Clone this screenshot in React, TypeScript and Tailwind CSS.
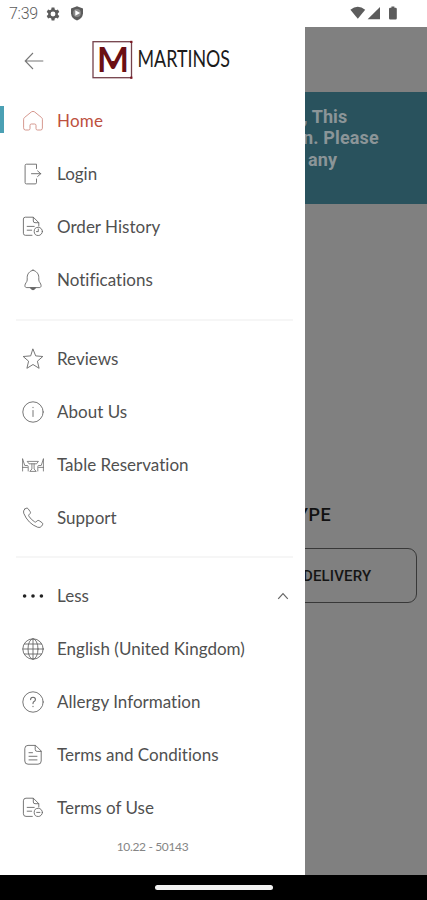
import type { ReactNode } from 'react'

interface MenuItem {
  label: string
  icon: ReactNode
  active?: boolean
  expanded?: boolean
}

function Icon({ children }: { children: ReactNode }) {
  return (
    <svg
      width="22"
      height="22"
      viewBox="0 0 22 22"
      fill="none"
      stroke="currentColor"
      strokeWidth="0.9"
      strokeLinecap="round"
      strokeLinejoin="round"
      className="shrink-0"
    >
      {children}
    </svg>
  )
}

const homeIcon = (
  <Icon>
    <path d="M1.6 9.3 Q1.6 8.3 2.4 7.6 L9.4 1.9 Q11 .8 12.6 1.9 L19.6 7.6 Q20.4 8.3 20.4 9.3 V18.2 Q20.4 20 18.6 20 H15.4 Q14 20 14 18.6 V15.4 Q14 14 12.6 14 H9.4 Q8 14 8 15.4 V18.6 Q8 20 6.6 20 H3.4 Q1.6 20 1.6 18.2 Z" />
  </Icon>
)

const loginIcon = (
  <Icon>
    <path d="M14.5 5.5 V1.2 H4.4 Q3.1 1.2 3.1 2.5 V19.6 Q3.1 20.9 4.4 20.9 H13.2 Q14.5 20.9 14.5 19.6 V16" />
    <path d="M9.5 10.7 H18.8 M15.6 7.9 L18.8 10.7 L15.6 13.5" />
  </Icon>
)

const orderIcon = (
  <Icon>
    <path d="M10 19.3 H3.4 Q1.4 19.3 1.4 17.3 V3 Q1.4 1.2 3.4 1.2 H11.3 L16.8 6.7 V10" />
    <path d="M11.3 1.4 V5 Q11.3 6.7 13 6.7 H16.6" />
    <path d="M5.2 10.4 H12.2 M5.2 14.2 H9.7" />
    <circle cx="16.3" cy="15.4" r="4.1" />
    <path d="M16.3 13 V15.6 H14.5" />
  </Icon>
)

const bellIcon = (
  <Icon>
    <path d="M11 1.2 C7.5 2.1 5.2 4.9 5.2 8.4 V11 C5.2 13.1 2.9 14.2 2.9 16.7 C2.9 18.1 3.8 18.6 5 18.6 H17 C18.2 18.6 19.1 18.1 19.1 16.7 C19.1 14.2 16.8 13.1 16.8 11 V8.4 C16.8 4.9 14.5 2.1 11 1.2 Z" />
    <path d="M8.4 18.9 Q11 23 13.6 18.9 Z" fill="currentColor" />
  </Icon>
)

const starIcon = (
  <Icon>
    <path d="M11 1.2 L13.7 7.9 L20.8 8.5 L15.4 13.2 L17.1 20.3 L11 16.5 L4.9 20.3 L6.6 13.2 L1.2 8.5 L8.3 7.9 Z" />
  </Icon>
)

const infoIcon = (
  <Icon>
    <circle cx="11" cy="11" r="10.2" />
    <path d="M11 9.5 V15.5 M11 6.3 V6.7" />
  </Icon>
)

const tableIcon = (
  <Icon>
    <g strokeWidth="0.8">
      <path d="M.6 5 V17 M.6 5 L2.8 11.5 H5.2 Q6.2 11.5 6.2 12.5 V17 M.6 13.4 H5.4" />
      <path d="M21.4 5 V17 M21.4 5 L19.2 11.5 H16.8 Q15.8 11.5 15.8 12.5 V17 M21.4 13.4 H16.6" />
      <path d="M5.6 7.4 H16.4 L14.6 9.8 H7.4 Z" />
      <path d="M9.9 9.8 V15 L7.8 17.4 H14.2 L12.1 15 V9.8" />
    </g>
  </Icon>
)

const phoneIcon = (
  <Icon>
    <path d="M2.6 2.2 L4 1.3 Q5.2 .7 6.1 1.7 L8.2 4.7 Q8.9 5.8 8 6.7 L6.9 7.8 Q6.4 8.4 6.9 9.2 Q9 12.6 12.7 14.9 Q13.5 15.4 14.1 14.8 L15.2 13.8 Q16.1 13 17.2 13.7 L20.2 15.8 Q21.2 16.7 20.5 17.8 L19.6 19.2 Q18.3 21 15.8 20.3 Q6 16.7 1.7 6.2 Q.9 3.8 2.6 2.2 Z" />
  </Icon>
)

const dotsIcon = (
  <Icon>
    <g fill="currentColor" stroke="none">
      <circle cx="2.6" cy="11" r="1.8" />
      <circle cx="11" cy="11" r="1.8" />
      <circle cx="19.4" cy="11" r="1.8" />
    </g>
  </Icon>
)

const globeIcon = (
  <Icon>
    <circle cx="11" cy="11" r="10.2" />
    <ellipse cx="11" cy="11" rx="5" ry="10.2" />
    <path d="M11 .8 V21.2 M.8 11 H21.2 M2.4 6 H19.6 M2.4 16 H19.6" />
  </Icon>
)

const questionIcon = (
  <Icon>
    <circle cx="11" cy="11" r="10.2" />
    <path d="M8.6 8.6 Q8.6 6.2 11 6.2 Q13.4 6.2 13.4 8.4 Q13.4 9.7 12 10.5 Q11 11.1 11 12.6 M11 15.2 V15.6" strokeWidth="1.1" />
  </Icon>
)

const termsIcon = (
  <Icon>
    <path d="M13.2 1.4 H6 Q2.8 1.4 2.8 4.6 V17 Q2.8 20.2 6 20.2 H16 Q19.2 20.2 19.2 17 V7.4 Z" />
    <path d="M13.2 1.6 V5.4 Q13.2 7.4 15.2 7.4 H19" />
    <path d="M7 8.7 H10.5 M7 12.3 H15 M7 15.9 H15" />
  </Icon>
)

const useIcon = (
  <Icon>
    <path d="M10.3 19.4 H4 Q1.4 19.4 1.4 16.8 V3.8 Q1.4 1.2 4 1.2 H11.3 L16.8 6.7 V10" />
    <path d="M11.3 1.4 V5 Q11.3 6.7 13 6.7 H16.6" />
    <path d="M5.2 10.4 H12.2 M5.2 14.2 H9.7" />
    <circle cx="16.3" cy="15.4" r="4.1" />
    <path d="M14.7 15.4 H17.9" />
  </Icon>
)

const groups: MenuItem[][] = [
  [
    { label: 'Home', icon: homeIcon, active: true },
    { label: 'Login', icon: loginIcon },
    { label: 'Order History', icon: orderIcon },
    { label: 'Notifications', icon: bellIcon },
  ],
  [
    { label: 'Reviews', icon: starIcon },
    { label: 'About Us', icon: infoIcon },
    { label: 'Table Reservation', icon: tableIcon },
    { label: 'Support', icon: phoneIcon },
  ],
  [
    { label: 'Less', icon: dotsIcon, expanded: true },
    { label: 'English (United Kingdom)', icon: globeIcon },
    { label: 'Allergy Information', icon: questionIcon },
    { label: 'Terms and Conditions', icon: termsIcon },
    { label: 'Terms of Use', icon: useIcon },
  ],
]

function StatusBar() {
  return (
    <header className="flex h-[27px] shrink-0 items-center bg-white pl-[9px] text-[#5c5c5c]">
      <span className="w-[30px] font-['Roboto',sans-serif] text-[16px] font-light tracking-[-0.3px]">7:39</span>
      <svg width="14" height="14" viewBox="0 0 24 24" fill="currentColor" className="ml-[7px]">
        <path
          fillRule="evenodd"
          d="M9.6 1 H14.4 L15 4.3 L17.2 5.6 L20.4 4.4 L22.8 8.6 L20.3 10.8 V13.2 L22.8 15.4 L20.4 19.6 L17.2 18.4 L15 19.7 L14.4 23 H9.6 L9 19.7 L6.8 18.4 L3.6 19.6 L1.2 15.4 L3.7 13.2 V10.8 L1.2 8.6 L3.6 4.4 L6.8 5.6 L9 4.3 Z M12 7.8 A4.2 4.2 0 1 0 12 16.2 A4.2 4.2 0 1 0 12 7.8 Z"
        />
      </svg>
      <svg width="14" height="15" viewBox="0 0 14 15" className="ml-[10px]">
        <path d="M7 .3 L13 2.4 V7.5 Q12.6 12.3 7 14.6 Q1.4 12.3 1 7.5 V2.4 Z" fill="currentColor" />
        <circle cx="7" cy="7" r="3.9" fill="#8a8a8a" />
        <path d="M5.3 4.3 L10.1 7 L5.3 9.7 Z" fill="white" />
      </svg>
      <svg width="50" height="15" viewBox="0 0 50 15" fill="currentColor" className="ml-auto mr-[28px]">
        <path d="M1.4 3.7 Q8.8 -2 16.2 3.7 L8.8 12.8 Z" />
        <path d="M31 1 V13.2 H18.6 Z" />
        <path d="M41.2 1.7 H42.4 V.4 H45.4 V1.7 H46.6 Q47.8 1.7 47.8 2.9 V12.3 Q47.8 13.5 46.6 13.5 H41.2 Q40 13.5 40 12.3 V2.9 Q40 1.7 41.2 1.7 Z" />
      </svg>
    </header>
  )
}

function Logo() {
  return (
    <svg width="142" height="44" viewBox="0 0 142 44" className="ml-[47px] overflow-visible">
      <rect x="2" y="2.7" width="38.5" height="36" fill="white" stroke="#74414a" strokeWidth="1.3" />
      <rect x="39.2" y="1.8" width="2.2" height="2.2" fill="#7c1822" />
      <rect x="39.2" y="37.6" width="2.2" height="2.2" fill="#7c1822" />
      <text
        x="6"
        y="32.6"
        textLength="32"
        lengthAdjust="spacingAndGlyphs"
        className="fill-[#6b0f14] font-['Lato',sans-serif] text-[34px] font-bold"
      >
        M
      </text>
      <rect x="20.5" y="22" width="3.2" height="4" fill="#6b0f14" />
      <text
        x="46.5"
        y="28.3"
        textLength="92.5"
        lengthAdjust="spacingAndGlyphs"
        className="fill-[#1b1b1b] font-['Lato',sans-serif] text-[22.5px] font-normal"
      >
        MARTINOS
      </text>
    </svg>
  )
}

function MenuRow({ label, icon, active, expanded }: MenuItem) {
  return (
    <li className="flex h-[53px] items-center">
      <span className={active ? 'h-[27px] w-1 -translate-y-px bg-[#4ba0b4]' : 'w-1'} />
      <span
        className={`ml-[18px] ${active ? 'text-[#d08c82]' : expanded ? 'text-[#222]' : 'text-[#686868]'}`}
      >
        {icon}
      </span>
      <span
        className={`ml-[13px] whitespace-nowrap text-[17px] ${
          active ? 'tracking-[0.2px] text-[#bd5040]' : 'tracking-[0.02px] text-[#505050]'
        }`}
      >
        {label}
      </span>
      {expanded && (
        <svg
          width="12"
          height="8"
          viewBox="0 0 12 8"
          fill="none"
          stroke="#666"
          strokeWidth="1.2"
          className="ml-auto mr-[16px]"
        >
          <path d="M1.2 6.8 L6 1.6 L10.8 6.8" />
        </svg>
      )}
    </li>
  )
}

function Drawer() {
  return (
    <nav className="flex w-[305px] shrink-0 flex-col bg-white font-['Lato',sans-serif]">
      <div className="flex h-[67px] items-center pl-[24px]">
        <svg width="20" height="18" viewBox="0 0 20 18" fill="none" stroke="#777" strokeWidth="1.1">
          <path d="M19.3 9 H1.2 M9 1 L1.2 9 L9 17" />
        </svg>
        <Logo />
      </div>
      {groups.map((items, i) => (
        <div key={i}>
          {i > 0 && (
            <div className={`flex items-center pl-4 pr-3 ${i === 1 ? 'h-[26px] pt-px' : 'h-[25px]'}`}>
              <div className="h-[2px] w-full bg-[#f6f6f6]" />
            </div>
          )}
          <ul>
            {items.map(item => (
              <MenuRow key={item.label} {...item} />
            ))}
          </ul>
        </div>
      ))}
      <p className="mt-[5px] text-center text-[12px] leading-[16px] tracking-[-0.35px] text-[#858585]">10.22 - 50143</p>
    </nav>
  )
}

// Order page, dimmed while the drawer is open
function DimmedPage() {
  return (
    <main className="flex min-w-0 flex-1 flex-col overflow-hidden bg-[#808080] font-['Roboto',sans-serif]">
      <div className="mt-[65px] h-[112px] shrink-0 bg-[#29525d] pt-[14px] text-[18px] font-bold leading-[21.3px] text-[#8b9598]">
        <p className="-ml-[2px] whitespace-pre tracking-[0.1px]">, This</p>
        <p className="-ml-[2px] whitespace-pre tracking-[0.15px]">n. Please</p>
        <p className="ml-[3px] tracking-[0.1px]">any</p>
      </div>
      <h2 className="-ml-[8px] mt-[300px] text-[18px] font-medium leading-[22px] tracking-[0.5px] text-[#111]">YPE</h2>
      <div className="-ml-5 mr-[10px] mt-[22px] flex h-[55px] shrink-0 items-center rounded-[9px] border border-[#383838] pl-[17px] pt-[2px] text-[15px] font-medium tracking-[0.15px] text-[#151515]">
        DELIVERY
      </div>
    </main>
  )
}

export default function App() {
  return (
    <div className="flex h-[900px] w-[427px] flex-col overflow-hidden bg-white">
      <StatusBar />
      <div className="flex h-[848px] shrink-0">
        <Drawer />
        <DimmedPage />
      </div>
      <footer className="flex flex-1 justify-center bg-black pt-[10px]">
        <div className="h-[5px] w-[118px] rounded-full bg-[#f2f2f2]" />
      </footer>
    </div>
  )
}
